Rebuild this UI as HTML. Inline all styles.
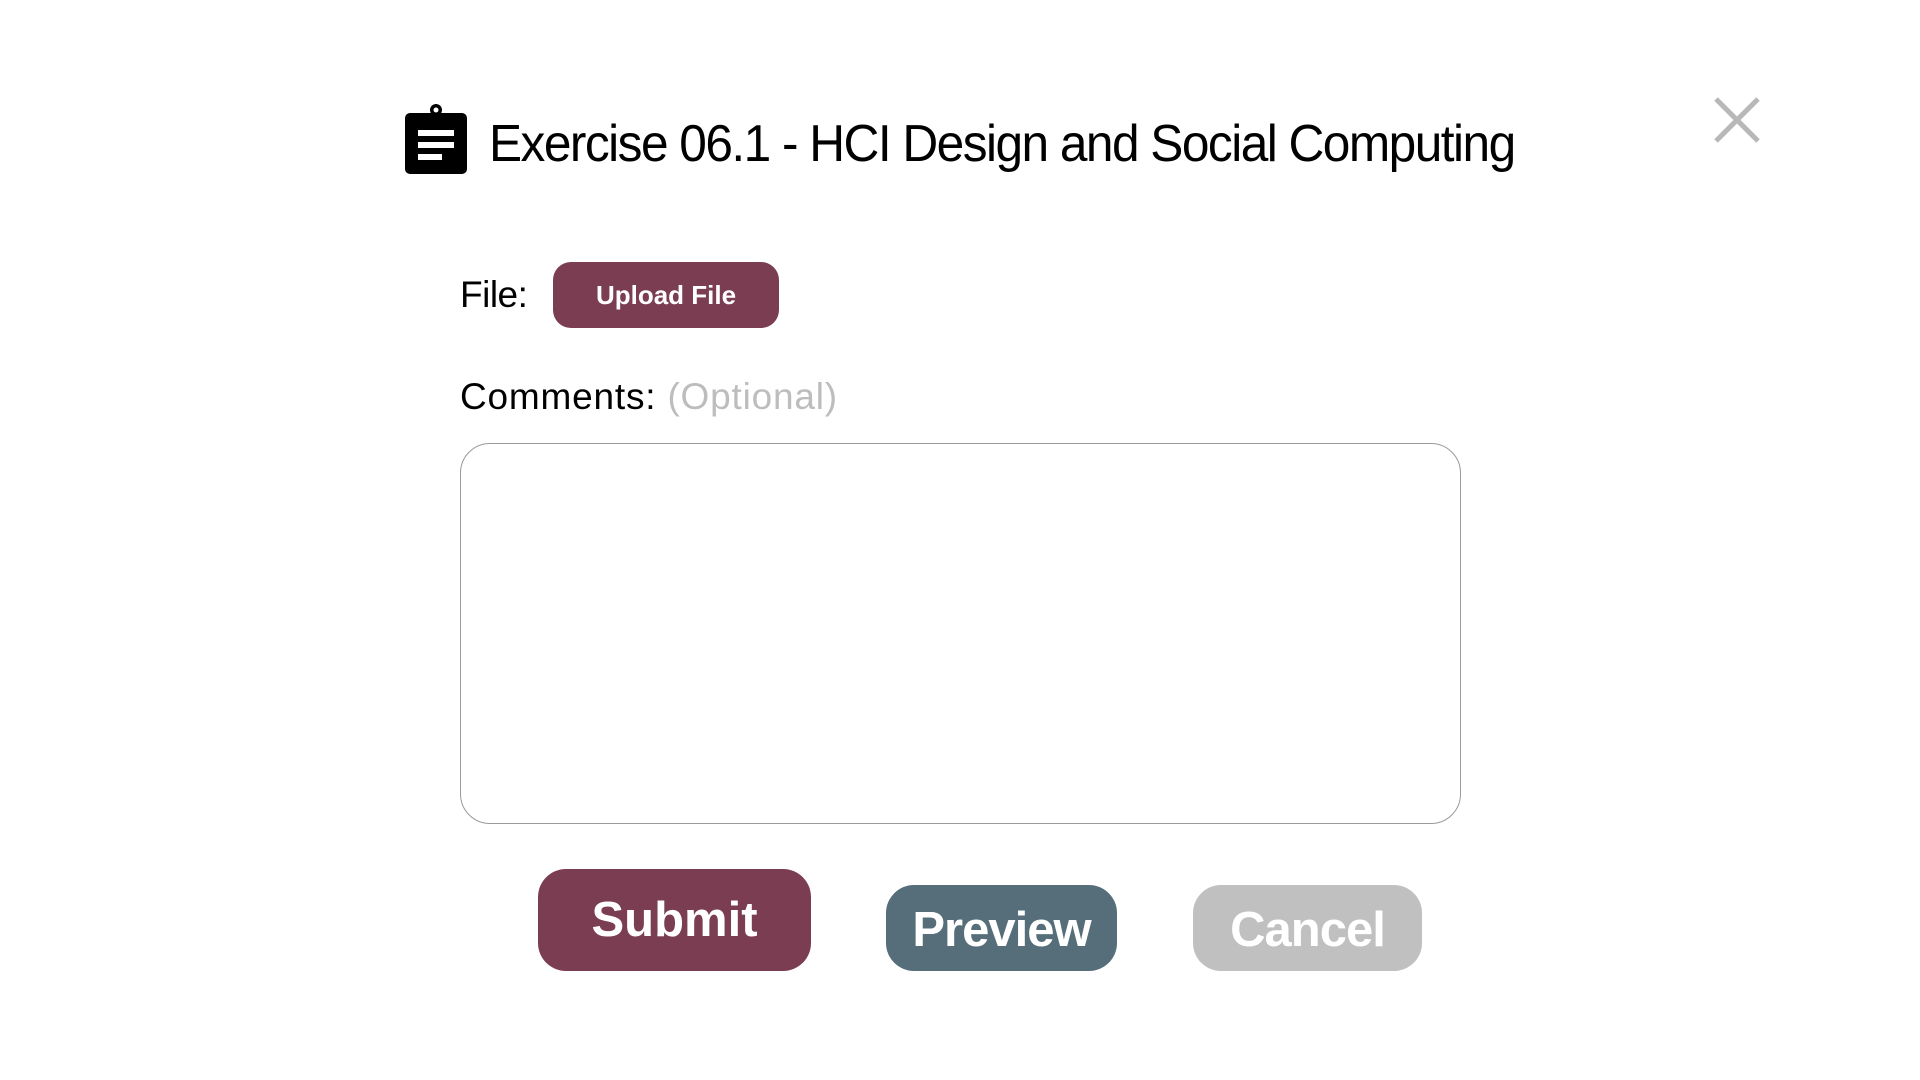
<!DOCTYPE html>
<html><head><meta charset="utf-8"><style>
html,body{margin:0;padding:0;background:#fff;width:1920px;height:1080px;overflow:hidden;font-family:"Liberation Sans",sans-serif;}
.abs{position:absolute;}
.title{left:489px;top:112px;font-size:52px;line-height:64px;color:#000;white-space:nowrap;letter-spacing:-1.6px;transform-origin:left center;transform:scaleX(0.954);}
.lbl{font-size:37px;color:#000;white-space:nowrap;letter-spacing:-0.5px;}
.btn{display:flex;align-items:center;justify-content:center;color:#fff;font-weight:bold;white-space:nowrap;}
</style></head><body>
<svg class="abs" style="left:405px;top:104px" width="62" height="70" viewBox="0 0 62 70">
<rect x="0" y="9" width="62" height="61" rx="5" fill="#000"/>
<path d="M19 9 h24 v8 h-24z" fill="#000"/>
<circle cx="31" cy="6" r="6" fill="#000"/>
<circle cx="31" cy="6" r="2.5" fill="#fff"/>
<rect x="13" y="26" width="36" height="6" fill="#fff"/>
<rect x="13" y="38" width="36" height="6" fill="#fff"/>
<rect x="13" y="50" width="24" height="6" fill="#fff"/>
</svg>
<div class="abs title">Exercise 06.1 - HCI Design and Social Computing</div>
<svg class="abs" style="left:1713px;top:96px" width="48" height="48" viewBox="0 0 48 48"><path d="M3 3L45 45M45 3L3 45" stroke="#b8b8b8" stroke-width="5"/></svg>
<div class="abs lbl" style="left:460px;top:272px;line-height:46px">File:</div>
<div class="abs btn" style="left:553px;top:262px;width:226px;height:66px;background:#7a3d52;border-radius:18px;font-size:26px">Upload File</div>
<div class="abs lbl" style="left:460px;top:374px;line-height:46px;letter-spacing:0.8px">Comments: <span style="color:#bdbdbd">(Optional)</span></div>
<div class="abs" style="left:460px;top:443px;width:999px;height:379px;border:1px solid #9a9a9a;border-radius:30px"></div>
<div class="abs btn" style="left:538px;top:869px;width:273px;height:102px;background:#7a3d52;border-radius:28px;font-size:49px">Submit</div>
<div class="abs btn" style="left:886px;top:885px;width:231px;height:86px;background:#566e79;border-radius:28px;font-size:49px;padding-top:4px;box-sizing:border-box;letter-spacing:-1px">Preview</div>
<div class="abs btn" style="left:1193px;top:885px;width:229px;height:86px;background:#c0c0c0;border-radius:28px;font-size:49px;padding-top:4px;box-sizing:border-box;letter-spacing:-1px">Cancel</div>
</body></html>
